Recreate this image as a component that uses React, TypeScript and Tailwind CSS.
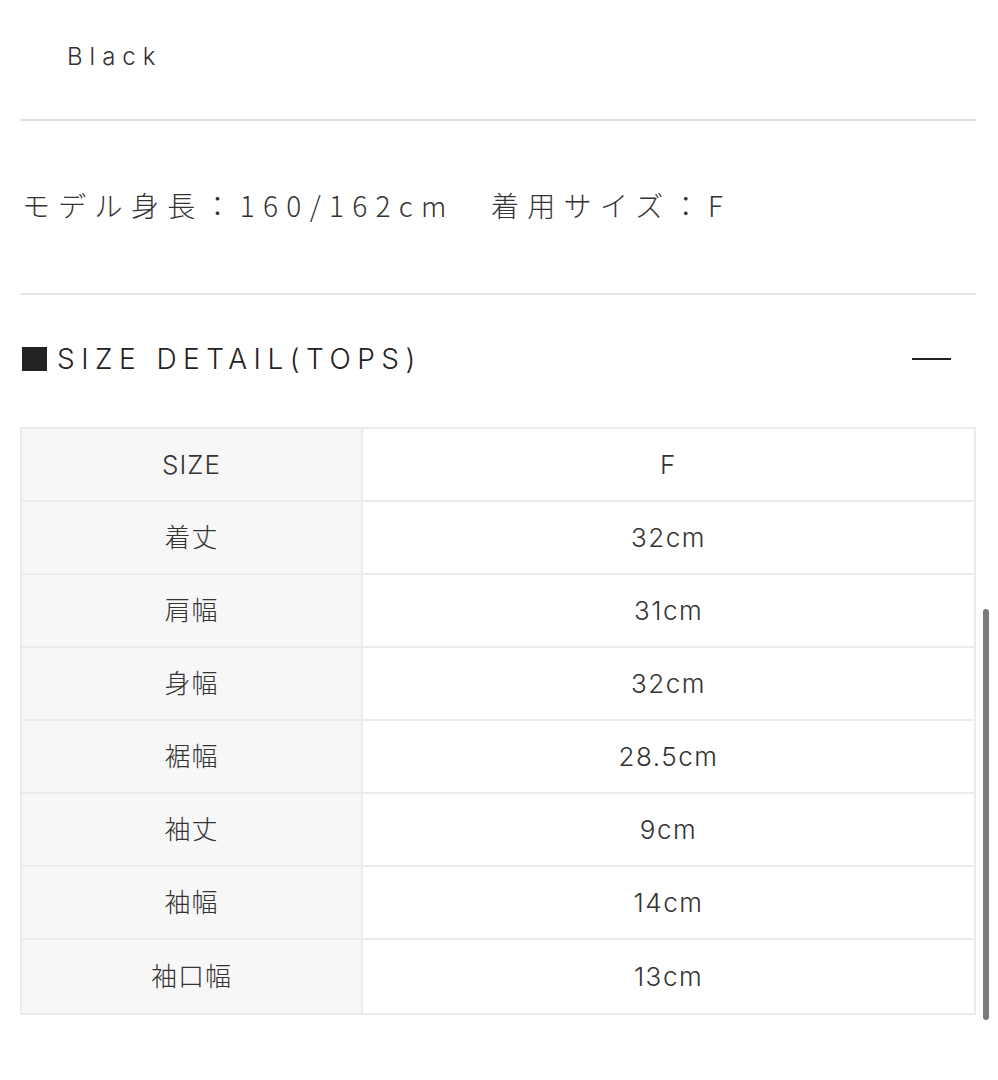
import React from "react";

const rows = [
  { label: "SIZE", value: "F" },
  { label: "着丈", value: "32cm" },
  { label: "肩幅", value: "31cm" },
  { label: "身幅", value: "32cm" },
  { label: "裾幅", value: "28.5cm" },
  { label: "袖丈", value: "9cm" },
  { label: "袖幅", value: "14cm" },
  { label: "袖口幅", value: "13cm" },
];

const latin = "font-['Inter','Noto_Sans_CJK_JP',sans-serif]";

export default function App() {
  return (
    <div className={`relative min-h-[1080px] bg-white pl-[20px] pr-[22px] text-[#2a2a2a] ${latin}`}>
      {/* color */}
      <div className="h-[121px] border-b-2 border-[#e0e0e0] pl-[47px] pt-[42px]">
        <span className="text-[24px] font-light leading-[30px] tracking-[7px] text-[#333]">Black</span>
      </div>

      {/* model info */}
      <div className="flex h-[174px] items-center border-b-2 border-[#e6e6e6] pb-[5px] pl-[2px]">
        <p className="font-['Noto_Sans_CJK_JP',sans-serif] text-[28px] font-light tracking-[8.3px] text-[#333]">
          モデル身長：160/162cm　着用サイズ：F
        </p>
      </div>

      {/* size detail heading */}
      <div className="flex h-[128px] items-center justify-between pl-[2px] pr-[25px]">
        <h2 className="flex items-center text-[28px] font-light tracking-[6.5px] text-[#222]">
          <span className="mr-[10px] inline-block h-[24px] w-[25px] bg-[#222]" />
          SIZE DETAIL(TOPS)
        </h2>
        <span className="block h-[2px] w-[39px] bg-[#222]" />
      </div>

      {/* table */}
      <div className="mt-[4px] border-2 border-[#ebebeb]">
        {rows.map((r, i) => (
          <div
            key={r.label}
            className={`grid h-[73px] grid-cols-[341px_1fr] ${i < rows.length - 1 ? "border-b-2 border-[#ebebeb]" : ""}`}
          >
            <div className="flex items-center justify-center border-r-2 border-[#ebebeb] bg-[#f7f7f7] text-[26px] font-light tracking-[1px] text-[#333]">
              {r.label}
            </div>
            <div className="flex items-center justify-center text-[26px] font-light tracking-[1.5px] text-[#333]">
              {r.value}
            </div>
          </div>
        ))}
      </div>

      {/* overlay scrollbar */}
      <div className="absolute left-[983px] top-[609px] h-[411px] w-[6px] rounded-full bg-[#7b7b7b]" />
    </div>
  );
}
